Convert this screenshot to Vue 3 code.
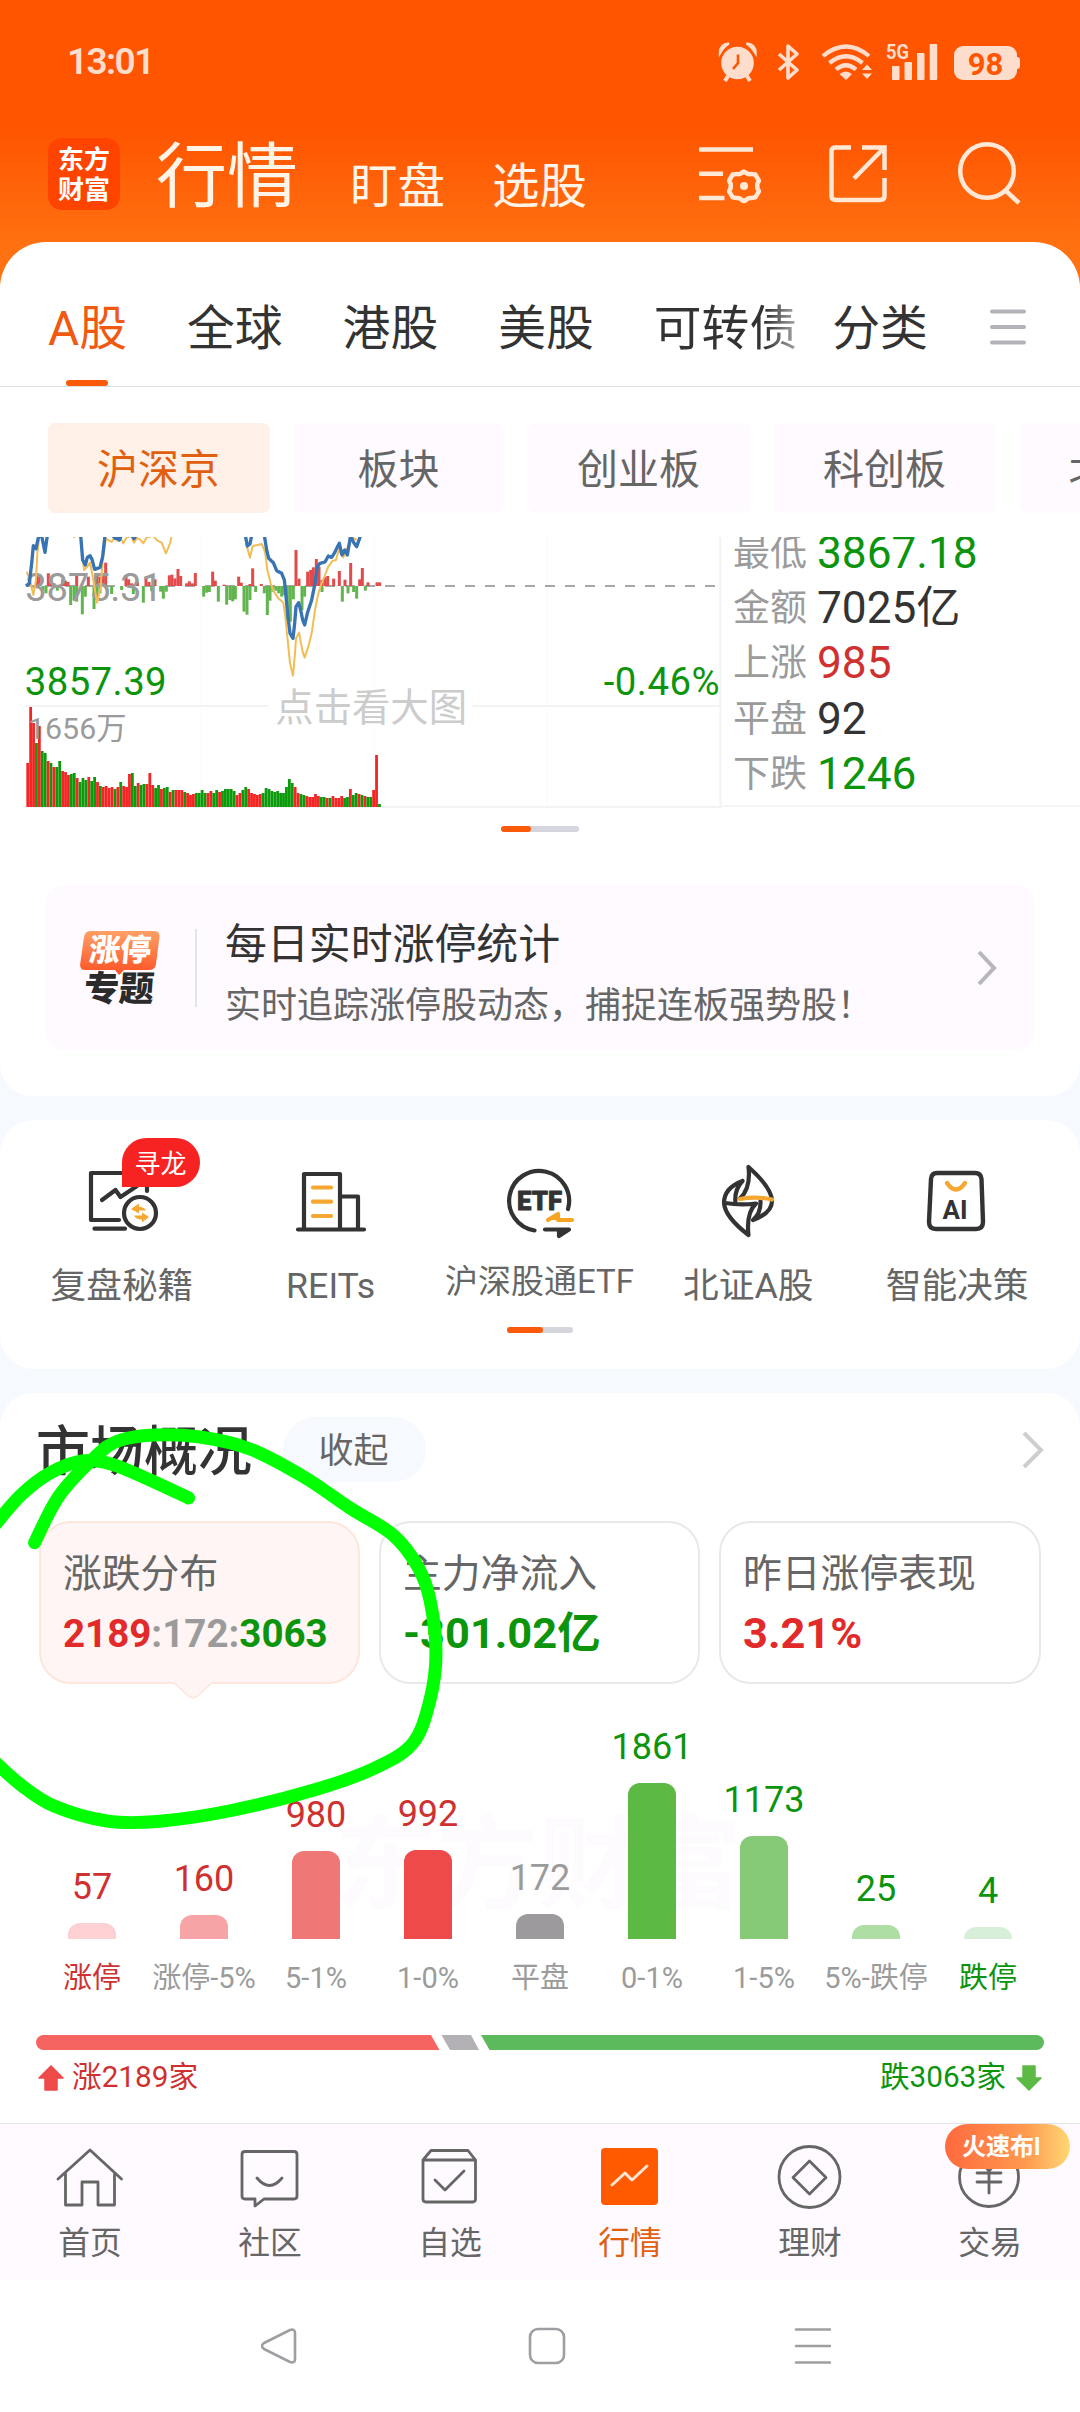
<script setup>
const tabs = ['A股', '全球', '港股', '美股', '可转债', '分类']
const chips = [
  { t: '沪深京', w: 222 },
  { t: '板块', w: 210 },
  { t: '创业板', w: 222 },
  { t: '科创板', w: 222 },
  { t: '北证50', w: 226 },
]
const stats = [
  { k: '最低', v: '3867.18', c: 'green' },
  { k: '金额', v: '7025亿', c: 'dark' },
  { k: '上涨', v: '985', c: 'red' },
  { k: '平盘', v: '92', c: 'dark' },
  { k: '下跌', v: '1246', c: 'green' },
]

const volumes = (
  'r44 r100 r84 g64 r81 g56 g54 r46 g44 r40 g40 g46 r36 r35 r32 g33 g34 r29 g25 g29 g27 r30 g26 g30 r25 g21 r20 r21 r19 r20 ' +
  'g18 r20 g25 r21 r20 r33 g34 g21 r24 g22 g23 r23 r34 r22 g19 g22 r18 g19 g20 r15 g17 r17 r17 r17 g15 r14 r12 r13 g14 g14 ' +
  'g17 g14 r14 r16 g14 g17 r15 g16 g18 g18 g18 g16 r12 r14 g17 g20 r18 r14 r13 r12 r13 g14 g19 g18 g16 g15 g16 g14 g14 g20 ' +
  'g28 g24 r20 r14 g13 g12 r11 r10 r10 r13 r11 g10 g10 r9 g9 r11 r9 r9 r11 g9 g10 r18 g12 g14 r13 g12 r11 g10 g10 r17 r52 g3'
).split(' ').map((s, i) => ({ x: 79 + i * 8.72, h: +s.slice(1) * 3, c: s[0] === 'r' ? '#f52525' : '#0a9a0a' }))

const up = [[112,165],[120,170],[145,160],[153,188],[162,190],[188,178],[196,182],[204,186],[230,168],[265,170],[291,165],[300,170],[309,165],[317,128],[378,165],[386,178],[395,190],[412,185],[438,170],[447,186],[465,178],[508,166],[516,164],[525,175],[534,147],[542,168],[560,190],[568,184],[577,190],[586,159],[638,155],[646,182],[672,194],[716,170],[724,188],[750,192],[758,145],[784,192],[888,90],[897,176],[923,155],[932,150],[940,142],[949,117],[957,140],[966,180],[975,172],[983,168],[1001,176],[1018,153],[1035,179],[1052,129],[1079,178],[1087,144],[1104,187],[1131,187],[1139,187]]
const down = [[129,212],[138,220],[172,212],[212,255],[222,240],[230,245],[247,283],[256,230],[282,267],[291,240],[300,220],[335,222],[365,210],[400,222],[430,248],[455,214],[482,215],[490,236],[499,215],[611,230],[620,218],[628,216],[655,245],[680,254],[690,240],[698,244],[706,238],[732,275],[741,284],[750,240],[767,216],[793,220],[802,285],[810,242],[819,215],[828,212],[836,220],[845,230],[854,225],[862,300],[871,305],[880,238],[906,270],[914,230],[966,216],[1027,245],[1044,220],[1061,216],[1070,236],[1096,212]]

const bars = [
  { v: '57', l: '涨停', h: 16, c: '#fdd0d3', t: 'red', lt: 'red' },
  { v: '160', l: '涨停-5%', h: 24, c: '#f7a4a6', t: 'red' },
  { v: '980', l: '5-1%', h: 88, c: '#ef7776', t: 'red' },
  { v: '992', l: '1-0%', h: 89, c: '#ee4a4a', t: 'red' },
  { v: '172', l: '平盘', h: 25, c: '#9c9a9d', t: 'grey' },
  { v: '1861', l: '0-1%', h: 156, c: '#5cb944', t: 'green' },
  { v: '1173', l: '1-5%', h: 103, c: '#86ca78', t: 'green' },
  { v: '25', l: '5%-跌停', h: 14, c: '#aedea4', t: 'green' },
  { v: '4', l: '跌停', h: 12, c: '#d7efd8', t: 'green', lt: 'green' },
]

// Smooth a list of points into a cubic path
function smooth(p) {
  let d = `M${p[0]}`
  for (let i = 0; i < p.length - 1; i++) {
    const a = p[i - 1] || p[i], b = p[i], c = p[i + 1], e = p[i + 2] || c
    d += `C${b[0] + (c[0] - a[0]) / 6},${b[1] + (c[1] - a[1]) / 6} ${c[0] - (e[0] - b[0]) / 6},${c[1] - (e[1] - b[1]) / 6} ${c}`
  }
  return d
}
const loop = smooth([[34.6,1542.7],[59,1496],[95,1457],[118,1441],[154,1435],[200,1437],[250,1449],[304,1477],[350,1508],[393,1535],[418,1567],[430,1600],[436,1653],[430,1700],[413,1743],[375,1768],[314,1790],[229,1811],[157,1821.5],[107,1821],[54,1806],[21,1785],[-6,1761]])
const tail = smooth([[-6,1526],[21,1495],[50,1473],[82,1461],[111,1464],[150,1480],[188.6,1498]])
</script>

<template>
  <div class="app">
    <div class="status">
      <span class="time">13:01</span>
      <svg class="sicons" width="310" height="44" viewBox="716 40 310 44" fill="#ffddcc">
        <circle cx="737.5" cy="63" r="16.3" />
        <path d="M720 53Q720 44 729 43.5Q724 46 720 53ZM755.500 53Q755.500 44 746.500 43.500Q751 46 755.500 53Z" stroke="#ffddcc" stroke-width="2.500" />
        <path d="M728 76L725 81M747 76L750 81" stroke="#ffddcc" stroke-width="4" />
        <path d="M738 54.500V63L733 69" fill="none" stroke="#ff5500" stroke-width="2.600" />
        <path d="M779 54L797 70L788 78V46L797 54L779 70" fill="none" stroke="#ffddcc" stroke-width="3.600" stroke-linejoin="round" />
        <g fill="none" stroke="#ffddcc" stroke-width="4.200">
          <path d="M823 56Q846 37 869 56" /><path d="M829.500 63Q846 49.500 862.500 63" /><path d="M836 69.500Q846 61 856 69.500" />
        </g>
        <path d="M839.500 74Q846 69 852 74L846 80ZM862 70L867 64.500L872 70ZM862 73.500L867 79L872 73.500Z" />
        <text x="886" y="59" font-size="21" font-weight="700" textLength="23" lengthAdjust="spacingAndGlyphs">5G</text>
        <rect x="892" y="66" width="7.500" height="14" rx="1" /><rect x="904.500" y="62" width="7.500" height="18" rx="1" />
        <rect x="917" y="53" width="7.500" height="27" rx="1" /><rect x="929.700" y="44" width="7.500" height="36" rx="1" />
        <rect x="954" y="46" width="63" height="34" rx="9" /><rect x="1014" y="57" width="6" height="12" rx="3" />
        <text x="985.500" y="74.500" font-size="31" font-weight="700" fill="#ff5500" text-anchor="middle">98</text>
      </svg>
    </div>

    <header class="head">
      <div class="logo"><span>东方</span><span>财富</span></div>
      <span class="h1">行情</span>
      <span class="h2 first">盯盘</span>
      <span class="h2">选股</span>
      <svg class="hicons" width="330" height="70" viewBox="696 138 330 70" fill="none" stroke="#ffe8d6" stroke-width="4.500">
        <path d="M699 149.500H753M699 173.700H723M699 198H724.500" />
        <path d="M744 171.500l3.300 2.200q2 .8 4 .2l4 .6 3.600 6.200-1.600 3.300v4l1.600 3.300-3.600 6-4 .8q-2-.5-3.600.6l-2.900 2.200h-1.600l-2.900-2.200q-1.600-1.100-3.600-.6l-4-.8-3.600-6 1.600-3.300v-4l-1.600-3.300 3.600-6.200 4-.6q2 .6 3.600-.2z" stroke-linejoin="round" />
        <circle cx="744" cy="186" r="4" fill="#ffe8d6" stroke="none" />
        <path d="M851 147.500H836Q831.500 147.500 831.500 151V196Q831.500 200 836 200H880Q884.500 200 884.500 196V178M862 147.500H884.500V170M883 149L854 178.500" />
        <circle cx="987" cy="171" r="26.800" /><path d="M1005 190L1019 203" />
      </svg>
    </header>

    <section class="card main">
      <nav class="tabs">
        <span v-for="(t, i) in tabs" :key="t" :class="['tab', { on: i === 0, fade: i === 4, last: i === 5 }]">{{ t }}</span>
        <svg class="burger" width="36" height="34" viewBox="0 0 36 34" stroke="#b4b2b6" stroke-width="4" stroke-linecap="round"><path d="M2 2.500H34M2 18H34M2 33.500H34" transform="translate(0 -1)" /></svg>
      </nav>
      <div class="chips">
        <span v-for="(c, i) in chips" :key="c.t" :class="['chip', { on: i === 0 }]" :style="{ width: c.w + 'px' }">{{ c.t }}</span>
      </div>
      <div class="quote">
        <svg class="chart" width="722" height="272" viewBox="0 51 2166 816">
          <g stroke="#eeeeee" stroke-width="3" stroke-dasharray="3 9"><path d="M602 51V860M1122 51V860M1641 51V860" /></g>
          <path d="M76 558H2160M76 861H2166M2161 51V861" stroke="#f3f3f4" stroke-width="6" />
          <path d="M78 198H2156" stroke="#8a8a8a" stroke-width="5" stroke-dasharray="30 30" stroke-dashoffset="3" />
          <rect v-for="([x, y]) in up" :key="'u' + x" :x="x - 4.5" :y="y" width="9" :height="198 - y" fill="#e34b4b" />
          <rect v-for="([x, y]) in down" :key="'d' + x" :x="x - 4.5" y="198" width="9" :height="y - 198" fill="#62b54e" />
          <text x="76" y="244" font-size="115" fill="#9b9b9b" textLength="412">3875.31</text>
          <g fill="none" stroke="#f3bd55" stroke-width="6" stroke-linejoin="round">
            <path d="M80 155L90 180L100 225L108 180L112 100L118 48M219 51H225M246 100L252 150L262 140L270 128L280 180L291 248L302 200L308 120L318 56L335 66L342 55L352 62L360 50L370 70L380 52L388 50M394 50L402 68L410 54L420 58L430 70L440 52L452 50M462 50L472 62L485 68L498 100L510 70L515 48" />
            <path d="M738 70L750 113L758 78L785 72L795 95L802 150L812 190L822 215L835 235L850 248L856 290L864 370L870 430L879 467L885 400L888 355L897 338L903 370L908 395L914 413L925 380L935 340L945 270L955 220L965 190L975 165L985 140L998 122L1008 120L1016 90L1030 112L1052 60L1062 55L1070 60" />
          </g>
          <g fill="none" stroke="#3873b3" stroke-width="10" stroke-linejoin="round">
            <path d="M78 198L88 190L95 130L100 77L108 86L116 48L125 48L135 97L142 46M242 46L248 120L256 135L262 112L270 107L276 118L284 148L300 142L308 110L315 46M338 46L345 55L352 54L358 60L364 46M396 46L402 56L408 46M736 46L742 78L750 72L755 46" />
            <path d="M793 46L800 90L806 115L820 128L830 152L845 160L853 180L858 230L864 290L870 340L879 355L884 310L888 260L896 248L902 270L908 300L914 315L922 280L935 240L945 190L952 140L960 130L975 126L985 108L995 112L1004 98L1010 85L1018 70L1026 105L1034 90L1042 105L1052 46L1060 66L1070 80L1082 46" />
          </g>
          <rect v-for="b in volumes" :key="b.x" :x="b.x" :y="861 - b.h" width="8.4" :height="b.h" :fill="b.c" />
          <text x="74" y="525" font-size="115" fill="#0c940c" textLength="426">3857.39</text>
          <text x="1811" y="525" font-size="115" fill="#0c940c" textLength="348">-0.46%</text>
          <text x="84" y="657" font-size="91" fill="#9b9b9b">1656万</text>
          <rect x="806" y="500" width="612" height="120" fill="#fff" />
          <text x="826" y="602" font-size="115" fill="#cccccc">点击看大图</text>
        </svg>
        <div class="stats">
          <div v-for="s in stats" :key="s.k" class="stat"><span class="k">{{ s.k }}</span><span :class="s.c">{{ s.v }}</span></div>
        </div>
      </div>
      <div class="dots a"><i></i></div>
      <div class="panel">
        <div class="badge2">
          <svg width="80" height="44" viewBox="0 0 80 44"><defs><linearGradient id="zt" x1="0" y1="0" x2="0" y2="1"><stop offset="0" stop-color="#ffa066" /><stop offset="1" stop-color="#fb5225" /></linearGradient></defs><path d="M10 0H74Q80 0 79.500 6L76 33Q75 39 69 39H44L39 44L35 39H5Q-.5 39 .2 33L4 6Q5 0 10 0Z" fill="url(#zt)" /></svg>
          <span class="b1">涨停</span><span class="b2">专题</span>
        </div>
        <i class="vline"></i>
        <div class="ptext"><div class="pt">每日实时涨停统计</div><div class="ps">实时追踪涨停股动态，捕捉连板强势股！</div></div>
        <svg class="chev" width="20" height="36" viewBox="0 0 20 36" fill="none" stroke="#b8b6ba" stroke-width="4"><path d="M2 2L17 18L2 34" /></svg>
      </div>
    </section>

    <section class="card tools">
      <div class="grid">
        <div class="tool">
          <svg width="80" height="80" viewBox="82 1162 80 80" fill="none" stroke="#333" stroke-width="4.200" stroke-linecap="round" stroke-linejoin="round">
            <path d="M147 1191V1173H91V1220H119" /><path d="M94.500 1228.700H125" /><path d="M102 1200L115.500 1190L120.500 1197L137 1186" />
            <circle cx="140" cy="1213" r="16" fill="#fff" />
            <g stroke="none" fill="#f5a732"><path d="M131 1209L139 1203.500V1207Q144 1206.500 146 1210.500H139V1213.500Z" /><path d="M149 1217L142 1222.500V1219.500Q136 1219.500 134 1215.500H142V1212.500Z" /></g>
          </svg>
          <b class="tip">寻龙</b>
          <span>复盘秘籍</span>
        </div>
        <div class="tool">
          <svg width="80" height="80" viewBox="291 1162 80 80" fill="none" stroke="#333" stroke-width="4.200" stroke-linecap="round" stroke-linejoin="round">
            <path d="M298 1229.500H364M304 1229V1174H340V1229M340 1196.500H358V1229" /><path d="M313 1187.500H331M313 1201.700H331M313 1216H331" stroke="#f5a732" />
          </svg>
          <span>REITs</span>
        </div>
        <div class="tool small">
          <svg width="80" height="80" viewBox="500 1162 80 80" fill="none" stroke="#333" stroke-width="4.200" stroke-linecap="round" stroke-linejoin="round">
            <path d="M535.500 1230.500A30 30 0 1 1 569 1209" />
            <text x="518" y="1210" font-size="26" font-weight="900" fill="#333" stroke="#333" stroke-width=".8" textLength="45" lengthAdjust="spacingAndGlyphs">ETF</text>
            <path d="M549 1220L559 1214V1220H573" stroke="#f9a524" fill="#f9a524" /><path d="M546 1229.500H570L560 1236V1229.500" fill="#333" />
          </svg>
          <span>沪深股通ETF</span>
        </div>
        <div class="tool">
          <svg width="80" height="80" viewBox="709 1162 80 80" fill="none" stroke="#333" stroke-width="4.200" stroke-linecap="round" stroke-linejoin="round">
            <path d="M749.500 1167Q773 1188 773 1201Q773 1213 754 1220Q762 1213 761.500 1201M749.500 1167Q752 1188 741 1198.500M743.500 1181Q725 1188 725 1203Q726 1217 749.500 1235Q747 1213 757 1203.500Q742 1205.500 726 1203M743.500 1181Q735 1190 736.500 1203" />
            <path d="M741 1199Q757 1196 773 1199.500" stroke="#f5a732" />
          </svg>
          <span>北证A股</span>
        </div>
        <div class="tool">
          <svg width="80" height="80" viewBox="918 1162 80 80" fill="none" stroke="#333" stroke-width="4.400" stroke-linecap="round" stroke-linejoin="round">
            <path d="M938 1173H976Q982 1173 982.500 1179L984 1222Q984 1229 977 1229H937Q930 1229 930 1222L932 1179Q932.500 1173 938 1173Z" />
            <path d="M948 1183Q957 1196 966 1183" stroke="#f5a732" />
            <text x="943.500" y="1218.500" font-size="25" font-weight="700" fill="#333" stroke="none" textLength="25" lengthAdjust="spacingAndGlyphs">AI</text>
          </svg>
          <span>智能决策</span>
        </div>
      </div>
      <div class="dots b"><i></i></div>
    </section>

    <section class="card market">
      <div class="mhead">
        <h2>市场概况</h2><span class="pill">收起</span>
        <svg class="mchev" width="22" height="38" viewBox="0 0 22 38" fill="none" stroke="#cfcdd0" stroke-width="4"><path d="M2 2L19 19L2 36" /></svg>
      </div>
      <div class="boxes">
        <div class="box on">
          <span class="bl">涨跌分布</span>
          <span class="bv s"><b class="red2">2189</b><b class="grey">:172:</b><b class="green">3063</b></span>
          <svg class="ptr" width="42" height="18" viewBox="0 0 42 18"><path d="M0 1.500H2L17 14.500Q21 17 25 14.500L40 1.500H42V0H0Z" fill="#fff5f4" /><path d="M0 1H2L17 14.500Q21 17 25 14.500L40 1H42" fill="none" stroke="#fde6dc" stroke-width="1.500" /></svg>
        </div>
        <div class="box"><span class="bl">主力净流入</span><span class="bv green"><b>-301.02亿</b></span></div>
        <div class="box"><span class="bl">昨日涨停表现</span><span class="bv red2"><b>3.21%</b></span></div>
      </div>
      <div class="dist">
        <span class="wm">东方财富</span>
        <div v-for="b in bars" :key="b.l" class="col">
          <span :class="['n', b.t]">{{ b.v }}</span>
          <i :style="{ height: b.h + 'px', background: b.c }"></i>
          <span :class="['l', b.lt || 'grey']">{{ b.l }}</span>
        </div>
      </div>
      <svg class="ratio" width="1008" height="15" viewBox="0 0 1008 15">
        <path d="M7.500 0H395L403.500 15H7.500A7.500 7.500 0 0 1 7.500 0Z" fill="#f66462" /><path d="M405.500 0H435L443 15H414Z" fill="#b3b1b5" /><path d="M445 0H1000.500A7.500 7.500 0 0 1 1000.500 15H453.500Z" fill="#5cb95c" />
      </svg>
      <div class="sum">
        <svg width="26" height="26" viewBox="0 0 26 26"><path d="M13 1L25 13H19V25H7V13H1Z" fill="#ee4a4a" stroke="#ee4a4a" stroke-width="1.500" stroke-linejoin="round" /></svg>
        <span class="red">涨2189家</span>
        <span class="green r">跌3063家</span>
        <svg width="26" height="26" viewBox="0 0 26 26"><path d="M13 25L25 13H19V1H7V13H1Z" fill="#5cb944" stroke="#5cb944" stroke-width="1.500" stroke-linejoin="round" /></svg>
      </div>
    </section>

    <nav class="bottom">
      <div class="bi"><svg width="80" height="68" viewBox="50 2143 80 68"><path d="M58 2179L90 2150L121.500 2179M65.500 2174V2205H82V2182H98V2205H114.500V2174" /></svg><span>首页</span></div>
      <div class="bi"><svg width="80" height="68" viewBox="230 2143 80 68"><path d="M245 2151.500H294Q297 2151.500 297 2154.500V2196Q297 2199 294 2199H264L255 2206V2199H245Q242 2199 242 2196V2154.500Q242 2151.500 245 2151.500ZM257 2178Q269.500 2193 282 2178" /></svg><span>社区</span></div>
      <div class="bi"><svg width="80" height="68" viewBox="410 2143 80 68"><path d="M423 2160L431 2150.500H468L475.500 2160V2199Q475.500 2202 472.500 2202H426Q423 2202 423 2199ZM423 2160H475.500M435 2180L445 2190L464 2171" /></svg><span>自选</span></div>
      <div class="bi on"><svg width="80" height="68" viewBox="590 2143 80 68"><rect x="601" y="2148" width="57" height="57" rx="4" fill="#ff5a00" stroke="none" /><path d="M612 2185L625 2173L632 2180L647 2166" stroke="#ffe6d4" stroke-width="3" /></svg><span>行情</span></div>
      <div class="bi"><svg width="80" height="68" viewBox="770 2143 80 68"><circle cx="809.500" cy="2177" r="30.500" /><path d="M809.500 2161L826 2177.500L809.500 2194L793 2177.500Z" /></svg><span>理财</span></div>
      <div class="bi"><svg width="80" height="68" viewBox="950 2143 80 68"><circle cx="989" cy="2177" r="29.500" /><path d="M977 2173H1001M977 2182H1001M989 2170V2193M980 2160L989 2171L998 2160" /></svg><span>交易</span><b class="hot">火速布l</b></div>
    </nav>
    <div class="sys">
      <svg width="570" height="40" viewBox="261 2326 570 40" fill="none" stroke="#a09ea2" stroke-width="2.600" stroke-linecap="round" stroke-linejoin="round">
        <path d="M264 2343L290 2330Q295 2328.500 295 2333V2359Q295 2363.500 290 2362L264 2349Q260 2346 264 2343Z" />
        <rect x="530" y="2329" width="34" height="34" rx="8" /><path d="M796 2329.500H830M796 2346H830M796 2362.500H830" />
      </svg>
    </div>

    <svg class="ink" width="1080" height="2412" viewBox="0 0 1080 2412" fill="none" stroke="#00ff00" stroke-width="13" stroke-linecap="round"><path :d="loop" /><path :d="tail" /></svg>
  </div>
</template>

<style>
body { margin: 0; background: #fff; }
</style>
<style scoped>
* { box-sizing: border-box; }
.app { position: relative; width: 1080px; height: 2412px; overflow: hidden; display: flex; flex-direction: column; white-space: nowrap;
  font-family: Roboto, "Noto Sans CJK SC", sans-serif; color: #333;
  background: linear-gradient(#ff5500 0, #ff5500 128px, #ff7011 242px, #ff7512 300px) top / 100% 300px no-repeat, #f6faff; }
.green { color: #0c940c; } .red { color: #cf3030; } .red2 { color: #e22a2a; } .grey { color: #9b9b9b; } .dark { color: #333; }
.status { height: 100px; padding: 40px 54px 0 67px; display: flex; justify-content: space-between; flex: none; }
.time { font-size: 37px; font-weight: 600; line-height: 44px; color: #ffddcc; letter-spacing: -1.600px; }
.head { height: 142px; flex: none; display: flex; align-items: flex-start; padding-left: 48px; color: #fff4e8; }
.logo { width: 72px; height: 72px; margin-top: 38px; border-radius: 14px; background: #ff4400; color: #fff; display: flex; flex-direction: column; align-items: center; padding-top: 7px; font-weight: 700; font-size: 26px; line-height: 30px; }
.h1 { width: 142px; font-size: 71px; line-height: 80px; margin: 37px 0 0 36px; }
.h2 { font-size: 47.500px; line-height: 60px; margin: 57px 0 0 47px; }
.h2.first { margin-left: 52px; }
.hicons { margin: 38px 0 0 109px; }
.card { background: #fff; flex: none; width: 1080px; }
.main { height: 854px; border-radius: 46px 46px 32px 32px; overflow: hidden; }
.tabs { height: 145px; border-bottom: 1px solid #e0e0e0; display: flex; gap: 60px; padding-left: 48px; align-items: flex-start; }
.tab { position: relative; font-size: 47.800px; line-height: 60px; margin-top: 57px; }
.tab.on { color: #f0590f; }
.tab.on::after { content: ""; position: absolute; left: 18px; top: 81px; width: 42px; height: 6px; border-radius: 3px; background: #fb5a0a; }
.tab.fade { background: linear-gradient(90deg, #333 78%, #aaa); -webkit-background-clip: text; background-clip: text; color: transparent; }
.tab.last { margin-left: -25px; margin-right: 2px; }
.burger { margin-top: 68px; overflow: visible; }
.chips { display: flex; gap: 24px; padding: 36px 0 24px 48px; }
.chip { flex: none; height: 90px; border-radius: 8px; background: #fefaff; text-align: center; font-size: 41px; line-height: 94px; color: #666; text-indent: -1px; }
.chip.on { background: #fff0e8; color: #e0600f; }
.quote { height: 272px; display: flex; overflow: hidden; }
.chart { flex: none; overflow: hidden; }
.stats { flex: 1; padding-left: 11px; margin-top: -11px; height: 281px; border-bottom: 2px solid #f5f5f6; }
.stat { height: 55.2px; line-height: 55.200px; font-size: 44.200px; display: flex; }
.stat .k { width: 84px; font-size: 37px; color: #9b9b9b; }
.dots { height: 6px; border-radius: 3px; background: #d5d5dd; }
.dots i { display: block; height: 6px; border-radius: 3px; background: #fb5a0a; }
.dots.a { width: 78px; margin: 17px 0 0 501px; } .dots.a i { width: 30px; }
.panel { margin: 53px 45px 0; height: 165px; border-radius: 20px; background: #fefaff; display: flex; padding-left: 35px; }
.badge2 { position: relative; width: 80px; height: 76px; margin-top: 46px; }
.b1, .b2 { position: absolute; font-weight: 900; }
.b1 { left: 9px; top: 1px; color: #fff; font-size: 31px; line-height: 38px; transform: skewX(-5deg); }
.b2 { left: 4px; top: 38px; font-size: 35px; line-height: 42px; color: #2b2b2b; transform: skewX(-4deg); }
.vline { width: 2px; height: 78px; background: #e2e4e8; margin: 44px 28px 0 35px; }
.ptext { width: 752px; }
.pt { font-size: 41.900px; line-height: 60px; margin-top: 30px; }
.ps { font-size: 36px; line-height: 50px; margin-top: 6px; color: #666; }
.chev { margin-top: 65px; }
.tools { margin-top: 24px; height: 249px; border-radius: 34px; }
.grid { display: grid; grid-template-columns: repeat(5, 208.800px); padding: 42px 0 0 17.500px; }
.tool { position: relative; display: flex; flex-direction: column; align-items: center; font-size: 35.700px; line-height: 44px; color: #666; height: 165px; }
.tool span { margin-top: 22px; }
.tool.small span { font-size: 33px; margin-top: 18px; }
.tip { position: absolute; left: 104px; top: -24px; width: 78px; height: 49px; border-radius: 25px 25px 25px 0; background: #f72323; color: #fff; font-weight: 400; font-size: 26px; line-height: 52px; text-align: center; }
.dots.b { width: 66px; margin-left: 507px; } .dots.b i { width: 36px; }
.market { margin-top: 24px; height: 731px; border-radius: 34px 34px 0 0; }
.mhead { display: flex; padding: 24px 36px 0 36px; height: 128px; align-items: flex-start; }
h2 { margin: 0; font-size: 54px; font-weight: 500; line-height: 72px; width: 247px; }
.pill { width: 143px; height: 65px; border-radius: 33px; background: #f6faff; font-size: 35px; line-height: 70px; text-align: center; color: #666; text-indent: -2px; }
.mchev { margin: 14px 0 0 auto; }
.boxes { display: grid; grid-template-columns: 321px 321px 322px; gap: 19px; padding-left: 39px; }
.box { position: relative; height: 163px; border: 2px solid #e9e8ea; border-radius: 32px; padding: 26px 0 0 22px; display: flex; flex-direction: column; }
.box.on { background: #fff5f4; border-color: #fde6dc; }
.bl { font-size: 38.800px; line-height: 50px; color: #666; }
.bv { font-size: 43.400px; line-height: 60px; margin-top: 5px; }
.bv.s { font-size: 38.500px; }
.ptr { position: absolute; left: 131px; bottom: -18px; }
.dist { position: relative; display: grid; grid-template-columns: repeat(9, 112px); padding-left: 36px; height: 318px; }
.wm { position: absolute; left: 334px; top: 117px; font-size: 102px; line-height: 130px; font-weight: 700; color: #fefbff; }
.col { position: relative; display: flex; flex-direction: column; align-items: center; justify-content: flex-end; }
.col .n { font-size: 36px; line-height: 44px; margin-bottom: 14px; }
.col i { width: 48px; border-radius: 12px 12px 0 0; }
.col .l { font-size: 29px; line-height: 40px; margin-top: 19px; margin-bottom: 4px; }
.ratio { display: block; margin: 33px 0 0 36px; }
.sum { display: flex; align-items: center; padding: 0 38px; height: 58px; font-size: 29.700px; line-height: 50px; }
.sum svg { margin-top: -2px; }
.sum span { margin: -5px 0 0 8px; } .sum .r { margin: -5px 10px 0 auto; }
.bottom { flex: none; height: 157px; margin-top: -1px; position: relative; border-top: 1px solid #e2e6ea; background: #fefaff; display: grid; grid-template-columns: repeat(6, 180px); padding-top: 19px; }
.bi { position: relative; display: flex; flex-direction: column; align-items: center; font-size: 31.800px; line-height: 40px; color: #666; }
.bi svg { fill: none; stroke: #666; stroke-width: 2.800; stroke-linejoin: round; stroke-linecap: round; }
.bi span { margin-top: 12px; }
.bi.on { color: #e0600f; }
.hot { position: absolute; left: 45px; top: -19px; width: 125px; height: 45px; border-radius: 23px; background: linear-gradient(90deg, #ff6a3d, #ff9a50 65%, #ffd873); color: #fff; font-size: 24px; font-weight: 700; line-height: 47px; padding-left: 17px; }
.sys { flex: 1; background: #fff; padding: 46px 0 0 261px; }
.ink { position: absolute; left: 0; top: 0; pointer-events: none; }
</style>
